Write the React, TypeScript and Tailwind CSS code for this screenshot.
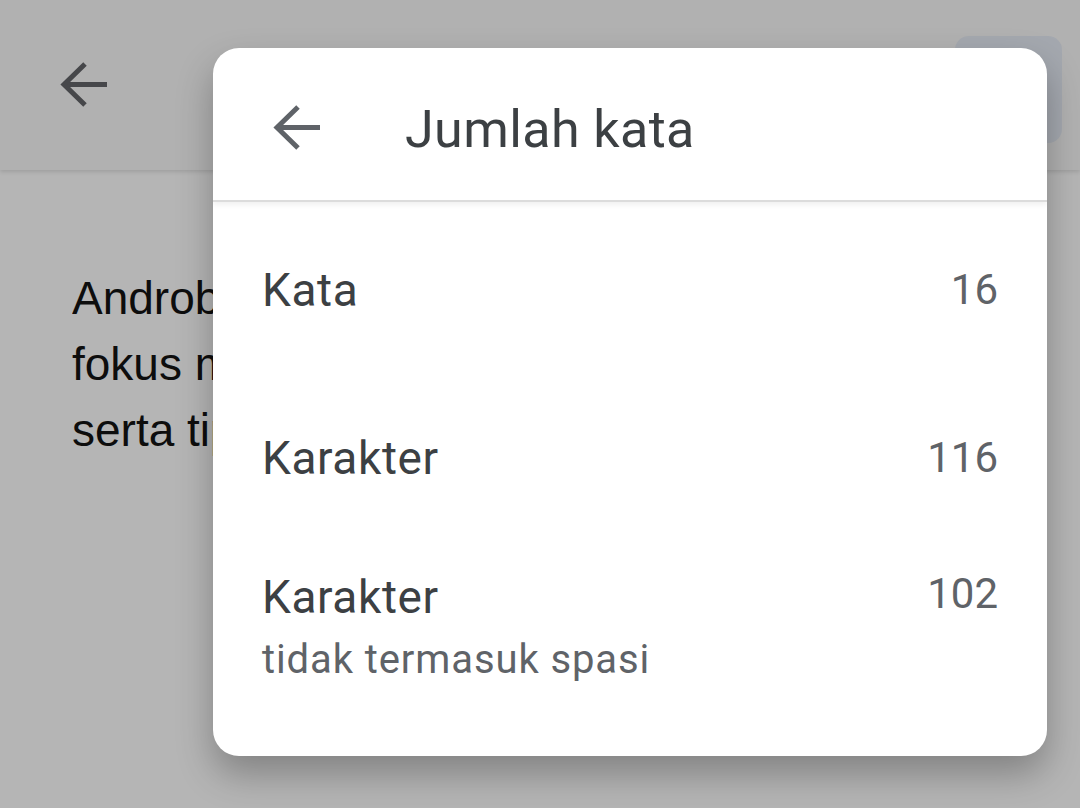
// @ts-nocheck
import * as React from 'react';

const rows = [
  { label: 'Kata', value: '16' },
  { label: 'Karakter', value: '116' },
  { label: 'Karakter', value: '102', sub: 'tidak termasuk spasi' },
];

function BackArrow({ className = '' }) {
  return (
    <svg width="48" height="48" viewBox="0 0 48 48" className={className} fill="none">
      <path d="M47 23.5H4" stroke="currentColor" strokeWidth="5" />
      <path d="M25 3 L4 23.5 L25 44" stroke="currentColor" strokeWidth="5" strokeLinejoin="miter" />
    </svg>
  );
}

export default function App() {
  return (
    <div className="relative w-[1080px] h-[808px] overflow-hidden bg-[#b5b5b5]" style={{ fontFamily: 'Roboto, "Noto Sans", sans-serif' }}>
      {/* dimmed page behind the dialog */}
      <header className="h-[170px] bg-[#b1b1b1] shadow-[0_2px_4px_rgba(0,0,0,0.12)] flex items-center justify-between pl-[60px] pr-[18px]">
        <BackArrow className="text-[#46474a]" />
        <div className="w-[107px] h-[107px] rounded-[14px] bg-[#a4a8af] self-start mt-[36px]" />
      </header>
      {/* only the part left of the dialog is visible */}
      <div
        className="ml-[72px] w-[141px] overflow-hidden pt-[95px] text-[46px] leading-[66px] text-[#0d0d0d] whitespace-nowrap"
        style={{ fontFamily: '"Liberation Sans", Arial, sans-serif' }}
      >
        <div>Androbuntu adalah</div>
        <div>fokus membahas</div>
        <div>serta tips dan trik</div>
      </div>

      {/* dialog */}
      <div className="absolute left-[213px] top-[48px] w-[834px] h-[708px] bg-white rounded-[26px] shadow-[0_18px_36px_rgba(0,0,0,0.28)] overflow-hidden">
        <div className="h-[154px] flex items-center pl-[60px] pt-[8px] border-b-[2px] border-[#dcdcdc] shadow-[0_3px_5px_rgba(0,0,0,0.06)]">
          <BackArrow className="text-[#5f6368]" />
          <span className="ml-[84px] mt-[4px] text-[52px] leading-[60px] text-[#3c4043] tracking-[0.4px]">Jumlah kata</span>
        </div>
        <div className="px-[49px] pt-[61px]">
          <div className="flex justify-between items-center h-[54px]">
            <span className="text-[46px] leading-[54px] text-[#3c4043] tracking-[0.6px]">{rows[0].label}</span>
            <span className="text-[42px] leading-[54px] text-[#5f6368]">{rows[0].value}</span>
          </div>
          <div className="flex justify-between items-center h-[54px] mt-[114px]">
            <span className="text-[46px] leading-[54px] text-[#3c4043] tracking-[0.6px]">{rows[1].label}</span>
            <span className="text-[42px] leading-[54px] text-[#5f6368]">{rows[1].value}</span>
          </div>
          <div className="mt-[85px]">
            <div className="flex justify-between items-start h-[54px]">
              <span className="text-[46px] leading-[54px] text-[#3c4043] tracking-[0.6px]">{rows[2].label}</span>
              <span className="text-[42px] leading-[48px] text-[#5f6368]">{rows[2].value}</span>
            </div>
            <div className="mt-[12px] text-[40px] leading-[48px] text-[#5f6368] tracking-[0.9px]">{rows[2].sub}</div>
          </div>
        </div>
      </div>
    </div>
  );
}
